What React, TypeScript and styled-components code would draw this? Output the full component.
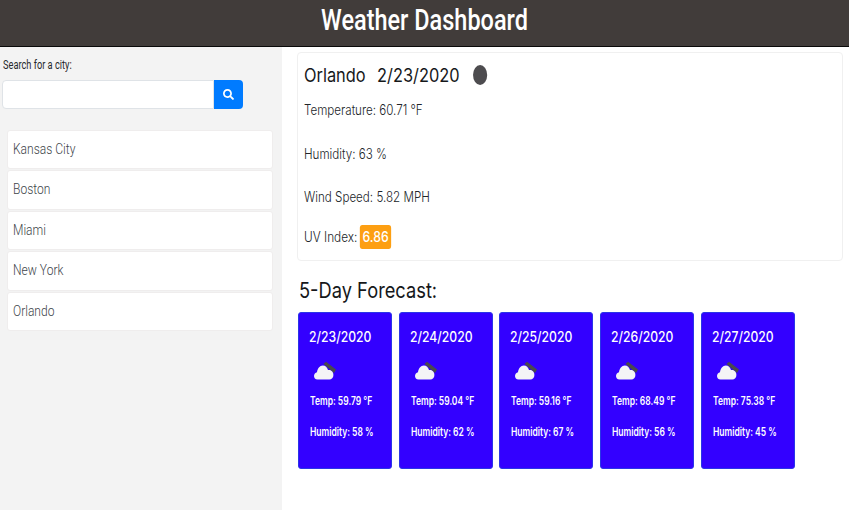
import React from 'react'
import styled, { createGlobalStyle, css } from 'styled-components'

const current = [
  'Temperature: 60.71 °F',
  'Humidity: 63 %',
  'Wind Speed: 5.82 MPH'
]

const cities = ['Kansas City', 'Boston', 'Miami', 'New York', 'Orlando']

const forecast = [
  { date: '2/23/2020', temp: '59.79', humidity: 58 },
  { date: '2/24/2020', temp: '59.04', humidity: 62 },
  { date: '2/25/2020', temp: '59.16', humidity: 67 },
  { date: '2/26/2020', temp: '68.49', humidity: 56 },
  { date: '2/27/2020', temp: '75.38', humidity: 45 }
]

// the text in the reference is squeezed horizontally
const squeeze = (k: number) => css`
  transform: scaleX(${k});
  transform-origin: left center;
  white-space: nowrap;
`

const GlobalStyle = createGlobalStyle`
  html, body {
    margin: 0;
    padding: 0;
    background: #fff;
  }
  * {
    box-sizing: border-box;
  }
  body {
    font-family: Inter, Roboto, "Liberation Sans", sans-serif;
    color: #212529;
  }
`

const Page = styled.div`
  width: 849px;
  height: 510px;
  display: flex;
  flex-direction: column;
  overflow: hidden;
`

const Header = styled.header`
  height: 47px;
  flex: none;
  background: #413c3a;
  border-bottom: 1px solid #0a0a0a;
  color: #fff;
  font-family: Roboto, sans-serif;
  font-size: 29px;
  font-weight: 500;
  line-height: 40px;
  text-align: center;
`

const HeaderTitle = styled.div`
  transform: scaleX(0.81);
`

const Body = styled.div`
  flex: 1;
  display: flex;
  min-height: 0;
`

const Sidebar = styled.aside`
  width: 282px;
  flex: none;
  background: #f3f3f3;
  padding: 11px 9.5px 0 2px;
`

const SearchLabel = styled.label`
  display: block;
  margin-left: 1px;
  font-family: Roboto, sans-serif;
  font-size: 12px;
  line-height: 14px;
  color: #26292c;
  ${squeeze(0.77)}
`

const SearchRow = styled.div`
  display: flex;
  width: 241px;
  height: 29px;
  margin-top: 8px;
`

const SearchInput = styled.input`
  flex: 1;
  min-width: 0;
  background: #fff;
  border: 1px solid #dfe3e7;
  border-radius: 4px 0 0 4px;
`

const SearchButton = styled.button`
  width: 29px;
  display: flex;
  align-items: center;
  justify-content: center;
  padding: 0;
  background: #007bff;
  border: none;
  border-radius: 0 4px 4px 0;
`

const CityList = styled.ul`
  list-style: none;
  margin: 21px 0 0 5px;
  padding: 0;
  display: flex;
  flex-direction: column;
  gap: 1px;
`

const CityItem = styled.li`
  height: 39.4px;
  padding-left: 5px;
  background: #fff;
  border: 1px solid #efeded;
  border-radius: 3px;
  font-family: Roboto, sans-serif;
  font-size: 14px;
  font-weight: 300;
  line-height: 37.6px;
  color: #40454a;
`

const CityName = styled.div`
  ${squeeze(0.86)}
`

const Main = styled.main`
  flex: 1;
  padding: 5px 6px 0 15px;
`

const CurrentCard = styled.section`
  height: 209px;
  padding: 10px 6px 0;
  background: #fff;
  border: 1px solid #f0f0f0;
  border-radius: 4px;
`

const CityTitle = styled.h2`
  display: flex;
  align-items: center;
  margin: 0;
  height: 24px;
  font-size: 18.5px;
  font-weight: 400;
  line-height: 24px;
  color: #16181a;
  ${squeeze(0.885)}
`

const TitleDate = styled.span`
  margin-left: 13px;
`

const MoonDot = styled.span`
  width: 16px;
  height: 20px;
  margin-left: 15px;
  border-radius: 50%;
  background: #4d4c4f;
`

const StatList = styled.div`
  margin-top: 12px;
`

const Stat = styled.p`
  margin: 0;
  height: 43.5px;
  font-size: 14px;
  font-weight: 300;
  line-height: 21px;
  color: #212529;
  ${squeeze(0.83)}
`

const UvRow = styled.div`
  display: flex;
  align-items: center;
  height: 26px;
  margin-top: -6px;
  font-size: 14px;
  font-weight: 300;
  ${squeeze(0.846)}
`

const UvBadge = styled.span`
  margin-left: 3px;
  padding: 0 3px;
  height: 24px;
  background: #fd9f12;
  border-radius: 3px;
  color: #fff;
  font-size: 14.5px;
  font-weight: 500;
  line-height: 24px;
`

const ForecastTitle = styled.h3`
  margin: 15px 0 0 2px;
  font-size: 21.5px;
  font-weight: 400;
  line-height: 28px;
  color: #16181a;
  ${squeeze(0.85)}
`

const ForecastRow = styled.div`
  display: flex;
  gap: 6.9px;
  margin: 8px 0 0 0.7px;
`

const ForecastCard = styled.article`
  width: 94px;
  height: 157px;
  padding: 15px 0 0 11px;
  background: #3300ff;
  border: 1px solid #2a35e8;
  border-radius: 3px;
  color: #fff;
`

const ForecastDate = styled.div`
  margin-left: -1px;
  font-size: 14.5px;
  font-weight: 500;
  line-height: 18px;
  ${squeeze(0.84)}
`

const CloudIcon = styled.svg`
  display: block;
  margin: 15px 0 13px 4px;
`

const ForecastLine = styled.div`
  font-size: 11.5px;
  font-weight: 600;
  line-height: 14px;
  ${squeeze(0.74)}

  & + & {
    margin-top: 17px;
  }
`

function Cloud() {
  return (
    <CloudIcon width="22" height="20" viewBox="0 0 22 20">
      <path d="M9.5 3 L12 0.8 L22 8.6 L20 12 Z" fill="#4a494c" />
      <path
        d="M3.5 18.6 C1.2 18.6 0 16.8 0 15 C0 13 1.4 11.6 3 11.2 C3.4 7.6 5.8 4.4 8.8 4.4 C11.4 4.4 13.2 6.4 14 9 C14.4 8.9 14.8 8.9 15.2 8.9 C17.6 8.9 19.4 11.2 19.4 14 C19.4 16.8 17.6 18.6 15.4 18.6 Z"
        fill="#f4f4f6"
      />
    </CloudIcon>
  )
}

export default function App() {
  return (
    <Page>
      <GlobalStyle />
      <Header>
        <HeaderTitle>Weather Dashboard</HeaderTitle>
      </Header>
      <Body>
        <Sidebar>
          <SearchLabel>Search for a city:</SearchLabel>
          <SearchRow>
            <SearchInput />
            <SearchButton aria-label="search">
              <svg width="11" height="11" viewBox="0 0 512 512">
                <path
                  fill="#fff"
                  d="M505 442.7L405.3 343c-4.5-4.5-10.6-7-17-7H372c27.6-35.3 44-79.7 44-128C416 93.1 322.9 0 208 0S0 93.1 0 208s93.1 208 208 208c48.3 0 92.7-16.4 128-44v16.3c0 6.4 2.5 12.5 7 17l99.7 99.7c9.4 9.4 24.6 9.4 33.9 0l28.3-28.3c9.4-9.4 9.4-24.6.1-34zM208 336c-70.7 0-128-57.2-128-128 0-70.7 57.2-128 128-128 70.7 0 128 57.2 128 128 0 70.7-57.2 128-128 128z"
                />
              </svg>
            </SearchButton>
          </SearchRow>
          <CityList>
            {cities.map(city => (
              <CityItem key={city}>
                <CityName>{city}</CityName>
              </CityItem>
            ))}
          </CityList>
        </Sidebar>
        <Main>
          <CurrentCard>
            <CityTitle>
              Orlando
              <TitleDate>2/23/2020</TitleDate>
              <MoonDot />
            </CityTitle>
            <StatList>
              {current.map(line => (
                <Stat key={line}>{line}</Stat>
              ))}
            </StatList>
            <UvRow>
              UV Index:
              <UvBadge>6.86</UvBadge>
            </UvRow>
          </CurrentCard>
          <ForecastTitle>5-Day Forecast:</ForecastTitle>
          <ForecastRow>
            {forecast.map(day => (
              <ForecastCard key={day.date}>
                <ForecastDate>{day.date}</ForecastDate>
                <Cloud />
                <ForecastLine>Temp: {day.temp} °F</ForecastLine>
                <ForecastLine>Humidity: {day.humidity} %</ForecastLine>
              </ForecastCard>
            ))}
          </ForecastRow>
        </Main>
      </Body>
    </Page>
  )
}
